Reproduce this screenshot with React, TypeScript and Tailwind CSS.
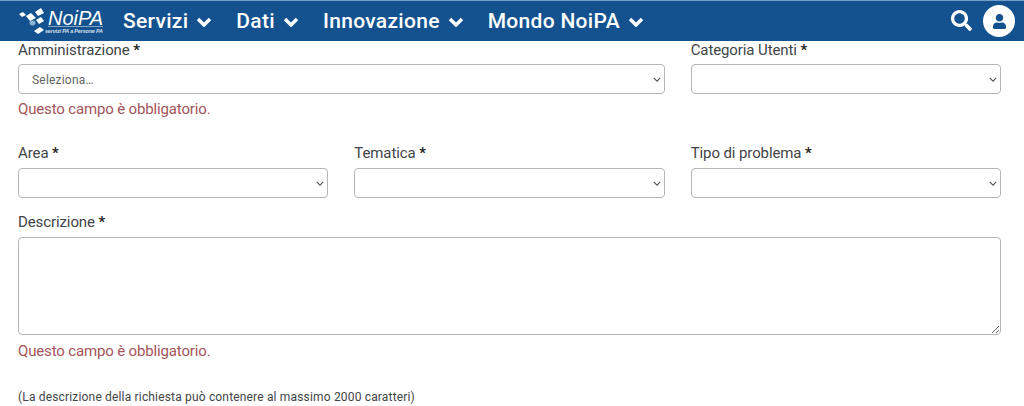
import React from "react";
import { FaSearch, FaUser } from "react-icons/fa";

function Chevron({ className }: { className: string }) {
  return (
    <svg viewBox="0 0 16 10" className={className} fill="none" stroke="currentColor" strokeWidth="3.4">
      <path d="M2 2 L8 8 L14 2" />
    </svg>
  );
}

function NavItem({ label }: { label: string }) {
  return (
    <div className="flex items-center gap-[8px]">
      <span className="text-[21px] font-medium leading-[40px] tracking-[0.3px]">{label}</span>
      <Chevron className="w-[16px] h-[10px] mt-[1px]" />
    </div>
  );
}

function Select({ text }: { text?: string }) {
  return (
    <div className="h-[30px] border border-[#b5b5b5] rounded-[4px] bg-white flex items-center justify-between pl-[13px] pr-[3px]">
      <span className="text-[12px] leading-[16px] mt-[2px] text-[#666] tracking-[0.2px]">{text}</span>
      <svg viewBox="0 0 10 6" className="w-[8px] h-[5px] text-[#555]" fill="none" stroke="currentColor" strokeWidth="1.4">
        <path d="M1 1 L5 5 L9 1" />
      </svg>
    </div>
  );
}

function Label({ text }: { text: string }) {
  return (
    <div className="text-[15px] leading-[20px] text-[#3f4447] whitespace-nowrap tracking-[-0.1px]">
      {text} <span className="text-[#222] font-semibold">*</span>
    </div>
  );
}

function Err() {
  return <div className="text-[15px] leading-[20px] text-[#a4545a] tracking-[-0.15px]">Questo campo è obbligatorio.</div>;
}

export default function App() {
  return (
    <div className="w-[1024px] h-[406px] overflow-hidden bg-white font-['Roboto','Noto_Sans',sans-serif]">
      <header className="h-[41px] bg-[#14528f] border-t border-[#6f9cc8] text-white flex items-center pl-[18px] pr-[9px]">
        <div className="w-[86px] h-[32px] shrink-0 flex items-center">
          <svg viewBox="0 0 86 32" className="w-[86px] h-[32px]">
            <g fill="#fff">
              <path d="M1 9 L5 7 L8 10 L4 12 Z" />
              <path d="M8 11 L13 8 L18 13 L12 16 Z" />
              <path d="M17 7 L23 3 L26 8 L20 11 Z" />
              <path d="M18 15 L23 12 L26 16 L21 19 Z" />
              <path d="M16 26 L22 22 L26 25 L20 29 Z" />
              <ellipse cx="14.5" cy="18" rx="3" ry="2.4" fill="#8fb4d6" />
              <text x="30" y="20" fontSize="20" fontStyle="italic" fontFamily="Liberation Sans, sans-serif" textLength="55" lengthAdjust="spacingAndGlyphs">NoiPA</text>
              <rect x="30" y="21" width="55" height="0.7" opacity="0.7" />
              <text x="27" y="28" fontSize="5.4" fontStyle="italic" fontWeight="700" fontFamily="Liberation Sans, sans-serif" textLength="58" opacity="0.8">servizi PA a Persone PA</text>
            </g>
          </svg>
        </div>
        <nav className="flex items-center gap-[24px] ml-[19px]">
          <NavItem label="Servizi" />
          <NavItem label="Dati" />
          <NavItem label="Innovazione" />
          <NavItem label="Mondo NoiPA" />
        </nav>
        <div className="ml-auto flex items-center gap-[11px]">
          <FaSearch className="w-[21px] h-[21px] -mt-[2px]" />
          <div className="w-[32px] h-[32px] rounded-full bg-white flex items-center justify-center text-[#14528f]">
            <FaUser className="w-[15px] h-[15px]" />
          </div>
        </div>
      </header>

      <main className="pl-[18px] pr-[23px] grid grid-cols-3 gap-x-[26px]">
        <div className="col-span-2">
          <div className="-mt-[1px]"><Label text="Amministrazione" /></div>
          <div className="mt-[4px]"><Select text="Seleziona…" /></div>
          <div className="mt-[5px]"><Err /></div>
        </div>
        <div>
          <div className="-mt-[1px]"><Label text="Categoria Utenti" /></div>
          <div className="mt-[4px]"><Select /></div>
        </div>

        <div className="mt-[24px]">
          <Label text="Area" />
          <div className="mt-[5px]"><Select /></div>
        </div>
        <div className="mt-[24px]">
          <Label text="Tematica" />
          <div className="mt-[5px]"><Select /></div>
        </div>
        <div className="mt-[24px]">
          <Label text="Tipo di problema" />
          <div className="mt-[5px]"><Select /></div>
        </div>

        <div className="col-span-3 mt-[14px]">
          <Label text="Descrizione" />
          <textarea className="block mt-[5px] w-full h-[98px] border border-[#b5b5b5] rounded-[4px] bg-white" />
          <div className="mt-[6px]"><Err /></div>
          <div className="mt-[28px] text-[12px] leading-[16px] text-[#3f4447] tracking-[0.17px]">(La descrizione della richiesta può contenere al massimo 2000 caratteri)</div>
        </div>
      </main>
    </div>
  );
}
